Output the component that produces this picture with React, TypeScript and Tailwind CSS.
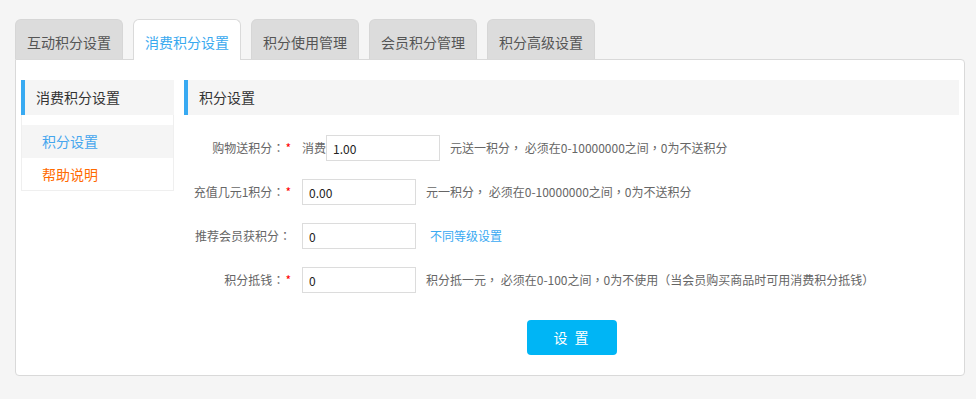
import React from "react";

const FONT = {
  fontFamily: '"Microsoft YaHei", "Noto Sans CJK SC", "Noto Sans", sans-serif',
};
const PUNCT_FONT = {
  fontFamily: '"Noto Sans CJK TC", "Noto Sans CJK SC", sans-serif',
};

function T({ text }: { text: string }) {
  const parts = text.split(/([：，（）])/);
  return (
    <>
      {parts.map((p, i) =>
        /^[：，（）]$/.test(p) ? (
          <span key={i} style={PUNCT_FONT}>
            {p}
          </span>
        ) : (
          <React.Fragment key={i}>{p}</React.Fragment>
        )
      )}
    </>
  );
}

const tabs = ["互动积分设置", "消费积分设置", "积分使用管理", "会员积分管理", "积分高级设置"];

function Tab({ label, active }: { label: string; active: boolean }) {
  if (active) {
    return (
      <div className="flex h-[41px] w-[108px] items-center justify-center rounded-t-[6px] border border-b-0 border-[#dadada] bg-white pt-[5px] text-[14px] text-[#3aa9ef]">
        {label}
      </div>
    );
  }
  return (
    <div className="flex h-[40px] w-[108px] items-center justify-center rounded-t-[6px] border border-b-0 border-[#d6d6d6] bg-[#dcdcdc] pt-[5px] text-[14px] text-[#555]">
      {label}
    </div>
  );
}

function Label({ text, required }: { text: string; required?: boolean }) {
  return (
    <div className="w-[107px] shrink-0 text-right text-[12px] text-[#666]">
      <T text={text} />
      {required && <span className="ml-[1px] text-[#f00]">*</span>}
    </div>
  );
}

function Input({ value }: { value: string }) {
  return (
    <input
      readOnly
      value={value}
      className="h-[26px] w-[114px] border border-[#dcdcdc] bg-white pl-[6px] text-[12px] text-[#222] outline-none"
      style={FONT}
    />
  );
}

export default function App() {
  return (
    <div className="min-h-screen bg-[#f5f5f5] pl-[15px] pr-[11px] pt-[19px]" style={FONT}>
      <div className="relative z-10 flex h-[41px] items-start gap-[10px]">
        {tabs.map((t, i) => (
          <Tab key={t} label={t} active={i === 1} />
        ))}
      </div>
      <div className="-mt-px flex gap-[10px] rounded-b-[4px] rounded-tr-[4px] border border-[#d9d9d9] bg-white px-[5px] pb-[20px] pt-[20px]">
        {/* sidebar */}
        <div className="w-[153px] shrink-0">
          <div className="flex h-[35px] items-center border-l-4 border-[#38aaf2] bg-[#f5f5f5] pl-[11px] text-[14px] text-[#333]">
            消费积分设置
          </div>
          <div className="border border-t-0 border-[#efefef] pt-[10px]">
            <div className="flex h-[33px] items-center bg-[#f5f5f5] pl-[20px] text-[14px] text-[#45a6ee]">
              积分设置
            </div>
            <div className="flex h-[32px] items-center pl-[20px] text-[14px] text-[#ff6a00]">
              帮助说明
            </div>
          </div>
        </div>
        {/* main */}
        <div className="flex-1">
          <div className="flex h-[35px] items-center border-l-4 border-[#38aaf2] bg-[#f5f5f5] pl-[11px] text-[14px] text-[#333]">
            积分设置
          </div>
          <div className="mt-[20px] flex flex-col gap-[18px]">
            <div className="flex h-[26px] items-center">
              <Label text="购物送积分：" required />
              <div className="ml-[11px] flex items-center">
                <span className="text-[12px] text-[#666]">消费</span>
                <Input value="1.00" />
              </div>
              <span className="ml-[10px] text-[12px] text-[#666]">
                <T text="元送一积分， 必须在0-10000000之间，0为不送积分" />
              </span>
            </div>
            <div className="flex h-[26px] items-center">
              <Label text="充值几元1积分：" required />
              <div className="ml-[11px]">
                <Input value="0.00" />
              </div>
              <span className="ml-[10px] text-[12px] text-[#666]">
                <T text="元一积分， 必须在0-10000000之间，0为不送积分" />
              </span>
            </div>
            <div className="flex h-[26px] items-center">
              <Label text="推荐会员获积分：" />
              <div className="ml-[11px]">
                <Input value="0" />
              </div>
              <span className="ml-[14px] text-[12px] text-[#3aa9f2]">不同等级设置</span>
            </div>
            <div className="flex h-[26px] items-center">
              <Label text="积分抵钱：" required />
              <div className="ml-[11px]">
                <Input value="0" />
              </div>
              <span className="ml-[10px] text-[12px] text-[#666]">
                <T text="积分抵一元， 必须在0-100之间，0为不使用（当会员购买商品时可用消费积分抵钱）" />
              </span>
            </div>
          </div>
          <div className="mt-[27px] pl-[343px]">
            <button
              className="flex h-[35px] w-[90px] items-center justify-center rounded-[4px] bg-[#00b5f5] text-[14px] tracking-[2px] text-white"
              style={FONT}
            >
              设 置
            </button>
          </div>
        </div>
      </div>
    </div>
  );
}
